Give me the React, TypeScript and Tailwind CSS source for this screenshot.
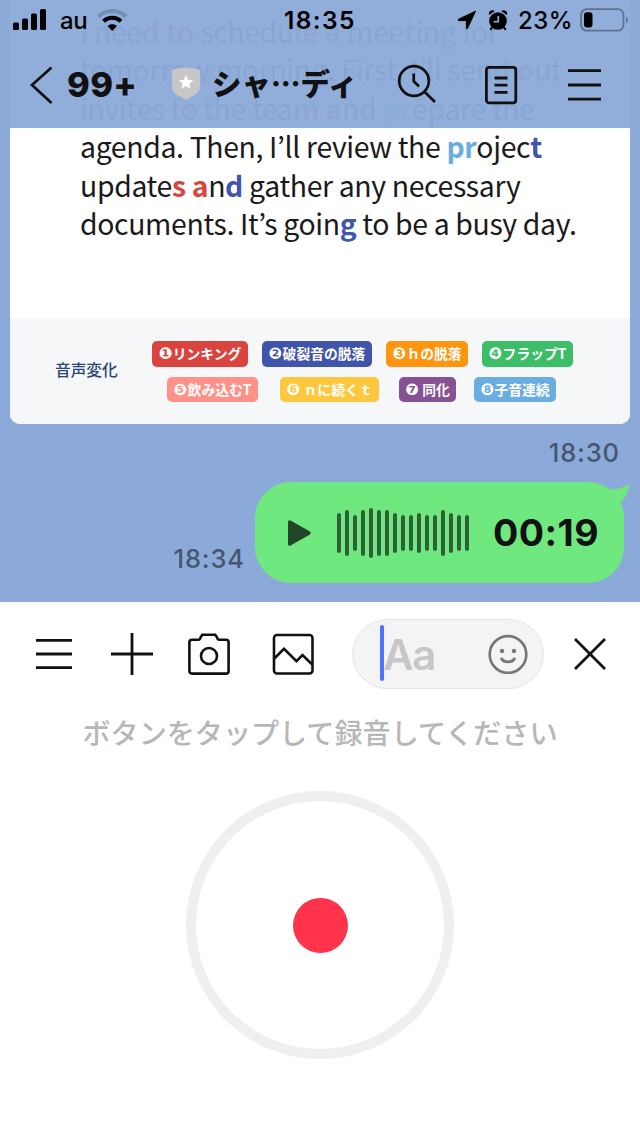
import React from 'react';

interface Part {
  t: string;
  c?: string;
}

const RED = 'font-bold text-[#d9453f]';
const NAVY = 'font-bold text-[#4055ad]';
const SKY = 'font-bold text-[#69ade1]';

const lines: Part[][] = [
  [{ t: 'I nee' }, { t: 'd to', c: RED }, { t: ' schedu' }, { t: 'le a', c: RED }, { t: ' mee' }, { t: 't', c: NAVY }, { t: 'in' }, { t: 'g', c: NAVY }, { t: ' for' }],
  [{ t: 'tomorrow mornin' }, { t: 'g', c: NAVY }, { t: '. First, I’ll sen' }, { t: 'd o', c: RED }, { t: 'ut' }],
  [{ t: 'invites to the tea' }, { t: 'm a', c: RED }, { t: 'nd ' }, { t: 'pr', c: SKY }, { t: 'epare the' }],
  [{ t: 'agenda. Then, I’ll review the ' }, { t: 'pr', c: SKY }, { t: 'ojec' }, { t: 't', c: NAVY }],
  [{ t: 'update' }, { t: 's a', c: RED }, { t: 'n' }, { t: 'd', c: NAVY }, { t: ' gather any necessary' }],
  [{ t: 'documents. It’s goin' }, { t: 'g', c: NAVY }, { t: ' to be a busy day.' }],
];

const tagRows = [
  {
    className: 'ml-[142px] gap-[14px]',
    tags: [
      { num: '❶', label: 'リンキング', className: 'w-24 bg-[#d9443f]' },
      { num: '❷', label: '破裂音の脱落', className: 'w-[110px] bg-[#4054ac]' },
      { num: '❸', label: 'ｈの脱落', className: 'w-[82px] bg-[#ff940f]' },
      { num: '❹', label: 'フラップT', className: 'w-[91px] bg-[#3dbd67]' },
    ],
  },
  {
    className: 'ml-[157px]',
    tags: [
      { num: '❺', label: '飲み込むT', className: 'w-[91px] bg-[#ff9189]' },
      { num: '❻', label: ' ｎに続くｔ', className: 'ml-[22px] w-[99px] bg-[#fec73e]' },
      { num: '❼', label: ' 同化', className: 'ml-5 w-[57px] bg-[#865195]' },
      { num: '❽', label: '子音連続', className: 'ml-[18px] w-[82px] bg-[#69ade1]' },
    ],
  },
];

const wave = [40, 46, 36, 46, 50, 46, 46, 40, 36, 36, 40, 36, 36, 46, 40, 36, 36];

function StatusBar() {
  return (
    <div className="flex h-10 items-center text-black">
      <svg className="ml-[13px] shrink-0" width="33" height="22" viewBox="0 0 33 22">
        <rect x="0" y="13.5" width="6" height="7.5" rx="1.6" />
        <rect x="9" y="9.5" width="6" height="11.5" rx="1.6" />
        <rect x="18" y="4.5" width="6" height="16.5" rx="1.6" />
        <rect x="27" y="0" width="6" height="21" rx="1.6" />
      </svg>
      <span className="ml-[14px] mt-0.5 w-9 text-[24px] font-medium leading-none tracking-[-0.4px]">au</span>
      <svg className="shrink-0" width="32" height="24" viewBox="0 0 32 24" fill="none">
        <path d="M2.5 8.5C10 1.2 22.5 1.2 30 8.5" stroke="#7590b6" strokeWidth="4" />
        <path d="M7.5 13.2C12.5 8.6 20 8.6 25 13.2" stroke="#000" strokeWidth="4" />
        <path d="M11.5 18C14 15.6 18.5 15.6 21 18L16.2 23Z" fill="#000" />
      </svg>
      <span className="ml-[156px] w-[74px] text-[24.5px] font-semibold leading-none tracking-[1.4px]">18:35</span>
      <svg className="ml-[99px] shrink-0" width="20" height="20" viewBox="0 0 20 20">
        <path d="M18.5 1.2L10.5 18.4Q9.7 19.5 9.4 18V10.6H2Q0.2 10.2 1.6 9.2Z" stroke="#000" strokeLinejoin="round" />
      </svg>
      <svg className="ml-[11px] shrink-0" width="20" height="22" viewBox="0 0 20 22">
        <circle cx="10" cy="12" r="8.8" />
        <path d="M4 18.5L2.8 20.3M16 18.5L17.2 20.3" stroke="#000" strokeWidth="2" strokeLinecap="round" />
        <path d="M1.2 6Q0 3 3 1.6Q5.3 0.8 6.6 2.2ZM18.8 6Q20 3 17 1.6Q14.7 0.8 13.4 2.2Z" />
        <path d="M10.3 7V12.8H5.5" stroke="#92aeda" strokeWidth="1.6" fill="none" />
      </svg>
      <span className="ml-[10px] mt-0.5 w-[62px] text-[24px] font-medium leading-none tracking-[0.4px]">23%</span>
      <svg className="shrink-0" width="49" height="24" viewBox="0 0 49 24" fill="none">
        <rect x="1" y="1.2" width="42.5" height="21.4" rx="5.5" stroke="#5e7193" strokeWidth="1.8" />
        <rect x="4" y="4.2" width="8.5" height="15.2" rx="3" fill="#000" />
        <path d="M46 8.5Q48 9.5 48 12T46 15.5Z" fill="#5e7193" />
      </svg>
    </div>
  );
}

function Header() {
  return (
    <header className="absolute inset-x-0 top-0 h-32 bg-[#8dabd9]/96">
      <StatusBar />
      <div className="flex h-[90px] items-center text-[#111]">
        <svg className="ml-[29px] shrink-0" width="24" height="38" viewBox="0 0 24 38" fill="none" stroke="#111" strokeWidth="2.7">
          <path d="M22.5 1.5L3 19L22.5 37" />
        </svg>
        <span className="ml-[14px] w-[76px] text-[34.5px] font-extrabold leading-none tracking-[0.3px]">99+</span>
        <svg className="mb-[3px] ml-[29px] shrink-0" width="28" height="34" viewBox="0 0 28 34">
          <path d="M0 4Q0 3 1.5 2.6Q14 -1.4 26.5 2.6Q28 3 28 4V19Q28 25 23 28Q18 30 14 33Q10 30 5 28Q0 25 0 19Z" fill="#c7c7c7" />
          <path d="M14 7.8L16.1 12.8L21.4 13.2L17.3 16.7L18.6 22L14 19.1L9.4 22L10.7 16.7L6.6 13.2L11.9 12.8Z" fill="#fff" />
        </svg>
        <span className="mb-1 ml-3 w-[145px] whitespace-nowrap font-['Noto_Sans_CJK_JP',sans-serif] text-[29.5px] font-black leading-none">
          シャ…ディ
        </span>
        <svg className="mb-[3px] ml-10 shrink-0" width="40" height="40" viewBox="0 0 40 40" fill="none" stroke="#111" strokeWidth="2.7">
          <circle cx="17" cy="17" r="14.8" />
          <path d="M16.7 9.5V17.2L22 22.5M27.5 27.8L38 38" />
        </svg>
        <svg className="ml-[47px] shrink-0" width="34" height="40" viewBox="0 0 34 40" fill="none" stroke="#111" strokeWidth="2.8">
          <rect x="2.4" y="2.4" width="29.4" height="35.4" rx="2.5" />
          <path d="M10.5 13H23.5M10.5 20.2H23.5M10.5 27.4H23.5" />
        </svg>
        <svg className="mb-px ml-[50px] shrink-0" width="34" height="34" viewBox="0 0 34 34" stroke="#111" strokeWidth="2.8">
          <path d="M0 2.7H33M0 17H33M0 31.2H33" />
        </svg>
      </div>
    </header>
  );
}

function LessonCard() {
  return (
    <div className="mx-[10px] h-[424px] overflow-hidden rounded-b-[10px] bg-white font-['Noto_Sans_CJK_JP',sans-serif]">
      <div className="h-[318px] pl-[70px] pt-3 text-[28.4px] tracking-[-0.35px] text-[#1a1a1a]">
        {lines.map((line, i) => (
          <p key={i} className="h-[38.4px] whitespace-nowrap leading-[38.4px]">
            {line.map((p, j) => (
              <span key={j} className={p.c}>{p.t}</span>
            ))}
          </p>
        ))}
      </div>
      <div className="relative flex h-[106px] flex-col gap-[10px] bg-[#f5f7f9] pt-[23px]">
        <span className="absolute left-[45px] top-[40px] text-[15.7px] font-medium leading-6 text-[#294775]">音声変化</span>
        {tagRows.map((row, i) => (
          <div key={i} className={`flex ${row.className}`}>
            {row.tags.map(tag => (
              <span
                key={tag.num}
                className={`flex h-[25.5px] items-center justify-center whitespace-pre rounded-[5px] pt-px text-[13.8px] font-bold leading-none text-white ${tag.className}`}
              >
                <span className="w-[14px] font-['DejaVu_Sans',sans-serif] text-[16px]">{tag.num}</span>
                {tag.label}
              </span>
            ))}
          </div>
        ))}
      </div>
    </div>
  );
}

function VoiceMessage() {
  return (
    <div className="flex items-end justify-end pr-4">
      <span className="mb-[11px] mr-[10px] text-[25.5px] font-medium leading-[26px] tracking-[0.9px] text-[#46566f]">18:34</span>
      <div className="relative flex h-[101px] w-[369px] items-center rounded-[36px] bg-[#6ee87f]">
        <svg className="absolute -right-[6px] top-0" width="30" height="24" viewBox="0 0 30 24" fill="#6ee87f">
          <path d="M0 8L11 7.6Q20 7.5 29.5 2Q28.5 12 21 20L14 24H0Z" />
        </svg>
        <svg className="ml-[33px] shrink-0" width="24" height="28" viewBox="0 0 24 28" fill="#224427">
          <path d="M0 3.5Q0 0.2 3 1.8L21.5 12.3Q24 14 21.5 15.7L3 26.2Q0 27.8 0 24.5Z" />
        </svg>
        <div className="ml-[25px] flex items-center gap-1">
          {wave.map((h, i) => (
            <div key={i} className="w-1 rounded-full bg-[#2d6037]" style={{ height: h }} />
          ))}
        </div>
        <span className="ml-6 text-[37.5px] font-bold leading-none tracking-[0.5px] text-[#111]">00:19</span>
      </div>
    </div>
  );
}

function Toolbar() {
  return (
    <div className="flex h-[104px] items-center">
      <svg className="ml-9 shrink-0" width="36" height="32" viewBox="0 0 36 32" stroke="#111" strokeWidth="2.8">
        <path d="M0 2.4H36M0 16H36M0 29.7H36" />
      </svg>
      <svg className="ml-[39px] shrink-0" width="42" height="42" viewBox="0 0 42 42" stroke="#111" strokeWidth="2.8">
        <path d="M21 0V42M0 21H42" />
      </svg>
      <svg className="ml-[35px] shrink-0" width="42" height="42" viewBox="0 0 42 42" fill="none" stroke="#111" strokeWidth="2.6">
        <path d="M4 6.8H10.8Q12 6.5 12.6 4.3L14.3 1.8H27.2L29 4.3Q29.6 6.5 30.8 6.8H38Q40.6 6.8 40.6 9.4V38Q40.6 40.6 38 40.6H4Q1.4 40.6 1.4 38V9.4Q1.4 6.8 4 6.8Z" />
        <circle cx="21" cy="23" r="8" />
      </svg>
      <svg className="ml-[42px] shrink-0" width="42" height="42" viewBox="0 0 42 42" fill="none" stroke="#111" strokeWidth="2.6">
        <rect x="2" y="2" width="38.5" height="38.5" rx="3" />
        <path d="M2.3 25.5L12 15.8L24.5 28.2L30.5 22L40.2 31.5" />
      </svg>
      <div className="ml-[38px] flex h-[70px] w-48 shrink-0 items-center rounded-full border border-[#e5e5e5] bg-[#f4f4f4]">
        <div className="mb-[3px] ml-[27px] h-14 w-1 rounded-full bg-[#4d73ff]" />
        <span className="-ml-px mt-0.5 w-[105px] text-[42px] font-semibold leading-none tracking-[-1.3px] text-[#c7c7c7]">Aa</span>
        <svg className="shrink-0" width="40" height="40" viewBox="0 0 40 40" fill="none" stroke="#777" strokeWidth="2.7">
          <circle cx="20" cy="20.5" r="18.3" />
          <circle cx="14" cy="17" r="2.2" fill="#777" stroke="none" />
          <circle cx="26" cy="17" r="2.2" fill="#777" stroke="none" />
          <path d="M13 24Q15 27.8 20 27.8T27 24" />
        </svg>
      </div>
      <svg className="ml-[30px] shrink-0" width="32" height="32" viewBox="0 0 32 32" stroke="#111" strokeWidth="2.7">
        <path d="M1 1L31 31M31 1L1 31" />
      </svg>
    </div>
  );
}

export default function App() {
  return (
    <div className="h-[1136px] w-[640px] overflow-hidden bg-white font-['Inter',sans-serif]">
      <div className="relative h-[602px] overflow-hidden bg-[#8caad9]">
        <LessonCard />
        <div className="mb-[15px] mt-[14px] pr-[20px] text-right text-[25.5px] font-medium leading-[29px] tracking-[0.9px] text-[#46566f]">18:30</div>
        <VoiceMessage />
        <Header />
      </div>
      <Toolbar />
      <div className="flex flex-col items-center">
        <p className="mt-[6px] whitespace-nowrap font-['Noto_Sans_CJK_JP',sans-serif] text-[28.1px] font-medium leading-10 text-[#b7b7b7]">
          ボタンをタップして録音してください
        </p>
        <button className="mt-[39px] flex size-[268px] items-center justify-center rounded-full border-[10px] border-[#efefef] bg-white">
          <span className="size-[55px] rounded-full bg-[#ff334b]" />
        </button>
      </div>
    </div>
  );
}
